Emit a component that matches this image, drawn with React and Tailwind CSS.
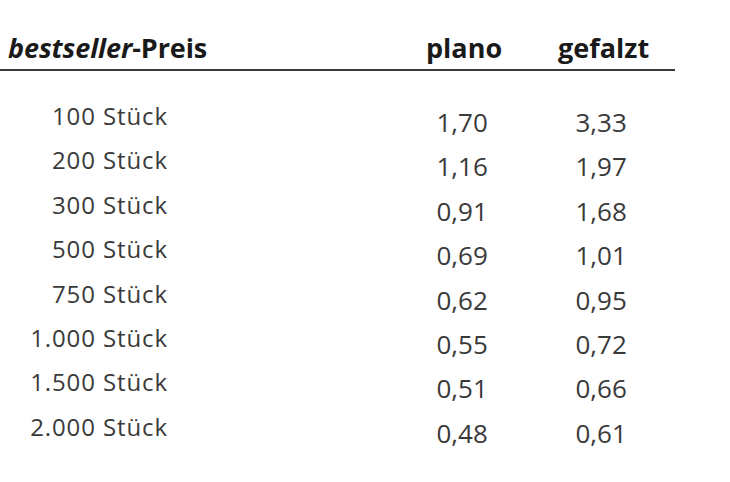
const rows = [
  ["100 Stück", "1,70", "3,33"],
  ["200 Stück", "1,16", "1,97"],
  ["300 Stück", "0,91", "1,68"],
  ["500 Stück", "0,69", "1,01"],
  ["750 Stück", "0,62", "0,95"],
  ["1.000 Stück", "0,55", "0,72"],
  ["1.500 Stück", "0,51", "0,66"],
  ["2.000 Stück", "0,48", "0,61"],
];

export default function App() {
  return (
    <div className="w-[730px] h-[482px] bg-white overflow-hidden font-['Open_Sans',sans-serif]">
      <div className="w-[675px] pt-[32px] pb-[5px] border-b-2 border-[#3a3a3a] flex text-[27px] leading-[32px] font-bold text-[#1a1a1a]">
        <div className="w-[426px] pl-[8px] whitespace-nowrap tracking-[-0.1px]">
          <span className="italic">bestseller</span>-Preis
        </div>
        <div className="w-[132px]">plano</div>
        <div>gefalzt</div>
      </div>
      <div className="mt-[22px] flex flex-col">
        {rows.map(([label, plano, gefalzt]) => (
          <div key={label} className="flex items-start h-[44.4px]">
            <div className="w-[168px] pt-[1px] text-right text-[24px] leading-[44.4px] tracking-[0.9px] text-[#3a3a3a] whitespace-nowrap">
              {label}
            </div>
            <div className="ml-[268.5px] w-[139px] pt-[7px] text-[26px] leading-[44.4px] text-[#3a3a3a]">
              {plano}
            </div>
            <div className="pt-[7px] text-[26px] leading-[44.4px] text-[#3a3a3a]">
              {gefalzt}
            </div>
          </div>
        ))}
      </div>
    </div>
  );
}
